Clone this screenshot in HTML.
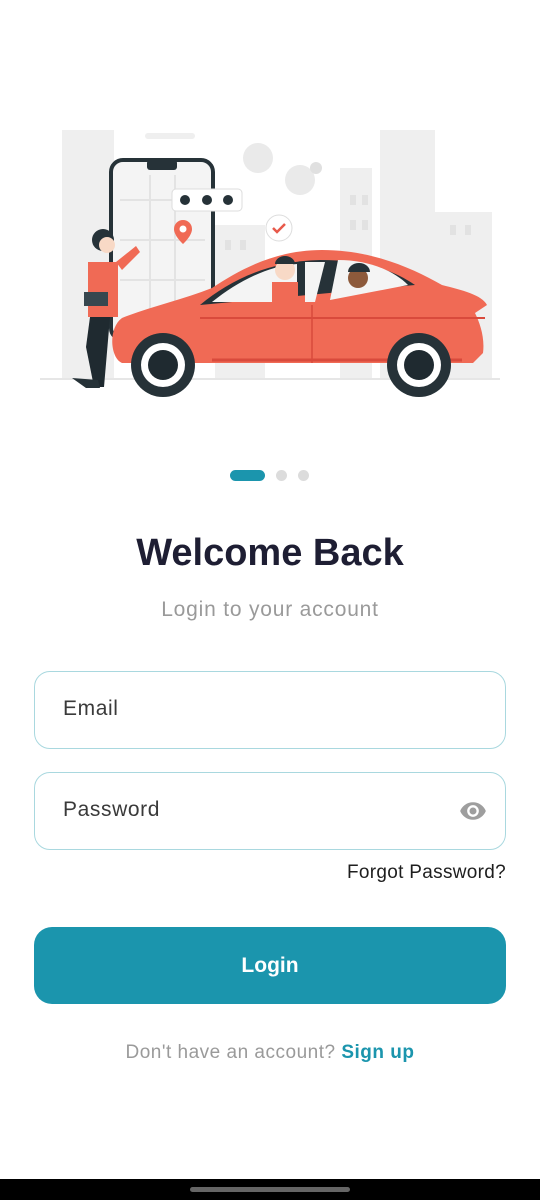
<!DOCTYPE html>
<html><head><meta charset="utf-8"><style>
*{margin:0;padding:0;box-sizing:border-box}
body{width:540px;height:1200px;background:#fff;font-family:"Liberation Sans",sans-serif;position:relative;overflow:hidden}
.abs{position:absolute}
.field{position:absolute;left:34px;width:472px;height:78px;border:1.5px solid #a9d8df;border-radius:16px;}
.field span{position:absolute;left:28px;top:25px;font-size:21px;color:#3a3a3a;letter-spacing:0.6px}
</style></head><body>
<svg class="abs" style="left:0;top:0" width="540" height="420" viewBox="0 0 540 420">
<g fill="#efefef">
<rect x="62" y="130" width="52" height="250"/>
<rect x="145" y="133" width="50" height="6" rx="3"/>
<rect x="215" y="225" width="50" height="155"/>
<rect x="340" y="168" width="32" height="212"/>
<rect x="380" y="130" width="55" height="250"/>
<rect x="430" y="212" width="62" height="168"/>
</g>
<g fill="#e2e2e2">
<rect x="350" y="195" width="6" height="10"/><rect x="362" y="195" width="6" height="10"/>
<rect x="350" y="220" width="6" height="10"/><rect x="362" y="220" width="6" height="10"/>
<rect x="450" y="225" width="6" height="10"/><rect x="465" y="225" width="6" height="10"/>
<rect x="225" y="240" width="6" height="10"/><rect x="240" y="240" width="6" height="10"/>
</g>
<circle cx="258" cy="158" r="15" fill="#eaeaea"/><circle cx="300" cy="180" r="15" fill="#eaeaea"/>
<circle cx="316" cy="168" r="6" fill="#e0e0e0"/>
<rect x="40" y="378" width="460" height="2" fill="#e6e6e6"/>
<rect x="111" y="160" width="102" height="180" rx="12" fill="#f4f4f4" stroke="#263238" stroke-width="4"/>
<rect x="147" y="160" width="30" height="10" rx="3" fill="#263238"/>
<g stroke="#e3e3e3" stroke-width="2" fill="none"><path d="M120 200h85M120 240h85M150 175v150M175 175v150M120 280h85"/></g>
<rect x="172" y="189" width="70" height="22" rx="4" fill="#fff" stroke="#ddd"/>
<circle cx="185" cy="200" r="5" fill="#263238"/><circle cx="207" cy="200" r="5" fill="#263238"/><circle cx="228" cy="200" r="5" fill="#263238"/>
<path d="M183 220a9 9 0 0 1 9 9c0 7-9 15-9 15s-9-8-9-15a9 9 0 0 1 9-9z" fill="#f06a55"/><circle cx="183" cy="229" r="3.5" fill="#fff"/>
<circle cx="279" cy="228" r="13" fill="#fff" stroke="#ddd"/><path d="M273 228l4 4 8-8" stroke="#e8594a" stroke-width="2.5" fill="none"/>
<circle cx="103" cy="240" r="11" fill="#263238"/><circle cx="107" cy="245" r="8" fill="#f8d9c6"/>
<path d="M88 262h30v55H88z" fill="#f06a55"/><path d="M116 262l20-16 4 6-18 18z" fill="#f06a55"/>
<path d="M84 292h24v14H84z" fill="#37474f"/>
<path d="M90 317h20l-6 70h-10l-8-40z" fill="#1f2a30"/><path d="M72 378l14 10h14l-2-8z" fill="#263238"/>
<path d="M122 318c30-12 60-18 90-30 30-20 65-38 110-38 50 0 90 18 120 35 20 5 40 10 45 20l-12 8c5 10 10 25 8 40l-10 10H122c-12-5-14-35 0-45z" fill="#f06a55"/>
<path d="M200 305c30-25 70-44 120-45 40 0 70 8 95 25z" fill="#263238"/>
<path d="M212 302c25-20 55-36 85-38v38z" fill="#f4f4f4"/>
<path d="M305 302v-40h20l-10 40z" fill="#f4f4f4"/><path d="M330 300l8-40c30 0 55 10 70 25z" fill="#f4f4f4"/>
<circle cx="285" cy="270" r="10" fill="#f8d9c6"/><path d="M275 264a10 8 0 0 1 20 0z" fill="#263238"/><rect x="272" y="282" width="26" height="20" fill="#f06a55"/>
<circle cx="358" cy="278" r="10" fill="#8d5a3b"/><path d="M348 272a11 9 0 0 1 22 0z" fill="#263238"/>
<path d="M200 318l285 0" stroke="#d94a3c" stroke-width="2"/><path d="M312 305v58" stroke="#d94a3c" stroke-width="1.5"/>
<path d="M212 360h250" stroke="#d94a3c" stroke-width="3"/>
<circle cx="163" cy="365" r="32" fill="#263238"/><circle cx="163" cy="365" r="22" fill="#fff"/><circle cx="163" cy="365" r="15" fill="#1f2a30"/>
<circle cx="419" cy="365" r="32" fill="#263238"/><circle cx="419" cy="365" r="22" fill="#fff"/><circle cx="419" cy="365" r="15" fill="#1f2a30"/>
</svg>
<div class="abs" style="left:230px;top:470px;width:35px;height:11px;border-radius:6px;background:#1b95ad"></div>
<div class="abs" style="left:276px;top:470px;width:11px;height:11px;border-radius:50%;background:#dcdcdc"></div>
<div class="abs" style="left:298px;top:470px;width:11px;height:11px;border-radius:50%;background:#dcdcdc"></div>
<div class="abs" style="left:0;top:532px;width:540px;text-align:center;font-size:38px;font-weight:bold;color:#1e1e33">Welcome Back</div>
<div class="abs" style="left:0;top:598px;width:540px;text-align:center;font-size:21px;letter-spacing:0.8px;color:#9a9a9a">Login to your account</div>
<div class="field" style="top:671px"><span>Email</span></div>
<div class="field" style="top:772px"><span>Password</span>
<svg class="abs" style="right:16px;top:24px" width="32" height="28" viewBox="0 0 24 24"><path fill="#9e9e9e" d="M12 4.5C7 4.5 2.7 7.6 1 12c1.7 4.4 6 7.5 11 7.5s9.3-3.1 11-7.5c-1.7-4.4-6-7.5-11-7.5zM12 17a5 5 0 1 1 0-10 5 5 0 0 1 0 10zm0-8a3 3 0 1 0 0 6 3 3 0 0 0 0-6z"/></svg></div>
<div class="abs" style="right:34px;top:862px;font-size:19px;letter-spacing:0.3px;color:#1e1e1e">Forgot Password?</div>
<div class="abs" style="left:34px;top:927px;width:472px;height:77px;border-radius:18px;background:#1b95ad;color:#fff;font-size:21px;font-weight:bold;text-align:center;line-height:77px">Login</div>
<div class="abs" style="left:0;top:1042px;width:540px;text-align:center;font-size:19px;letter-spacing:0.5px;color:#9a9a9a">Don't have an account? <b style="color:#1b95ad">Sign up</b></div>
<div class="abs" style="left:0;top:1179px;width:540px;height:21px;background:#000"></div>
<div class="abs" style="left:190px;top:1187px;width:160px;height:5px;border-radius:3px;background:#666"></div>
</body></html>
